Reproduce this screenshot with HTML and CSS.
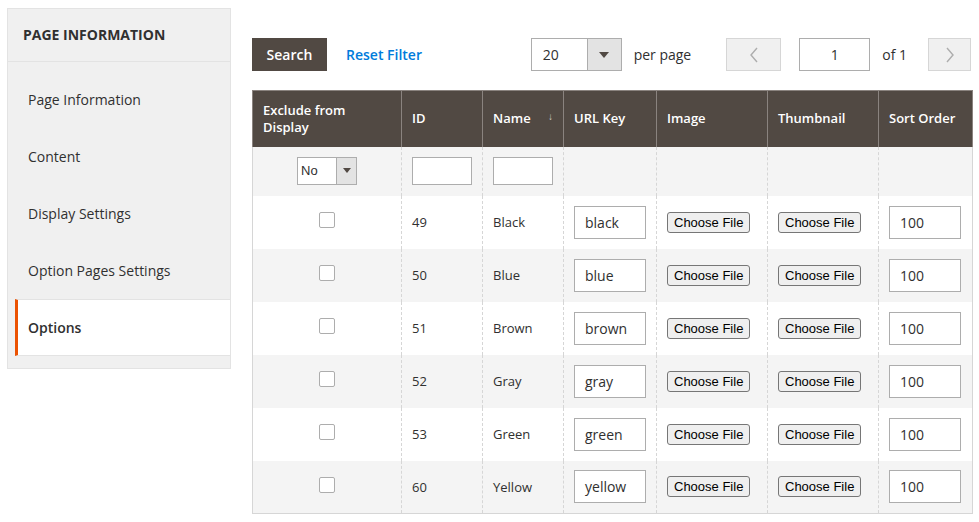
FILE: index.html
```html
<!DOCTYPE html>
<html>
<head>
<meta charset="utf-8">
<link rel="stylesheet" href="styles.css">
</head>
<body>
<div class="page">
  <aside class="sidebar">
    <div class="side-title">PAGE INFORMATION</div>
    <ul class="side-list">
      <li class="side-item">Page Information</li>
      <li class="side-item">Content</li>
      <li class="side-item">Display Settings</li>
      <li class="side-item">Option Pages Settings</li>
      <li class="side-item active">Options</li>
    </ul>
  </aside>
  <main class="main">
    <div class="toolbar">
      <button class="btn-search">Search</button>
      <a class="reset">Reset Filter</a>
      <div class="pager">
        <div class="select-box"><span class="select-val">20</span><span class="select-arrow"><i class="tri"></i></span></div>
        <span class="per-page">per page</span>
        <button class="nav-btn prev"><svg width="10" height="16" viewBox="0 0 10 16"><path d="M8 1 L2 8 L8 15" fill="none" stroke="#adadad" stroke-width="1.4"/></svg></button>
        <div class="page-input">1</div>
        <span class="of">of 1</span>
        <button class="nav-btn next"><svg width="10" height="16" viewBox="0 0 10 16"><path d="M2 1 L8 8 L2 15" fill="none" stroke="#adadad" stroke-width="1.4"/></svg></button>
      </div>
    </div>
    <table class="grid">
      <colgroup>
        <col style="width:149px"><col style="width:81px"><col style="width:81px"><col style="width:93px"><col style="width:111px"><col style="width:111px"><col style="width:94px">
      </colgroup>
      <thead>
        <tr>
          <th>Exclude from<br>Display</th>
          <th>ID</th>
          <th class="sortable">Name<span class="sort">↓</span></th>
          <th>URL Key</th>
          <th>Image</th>
          <th>Thumbnail</th>
          <th>Sort Order</th>
        </tr>
      </thead>
      <tbody>
        <tr class="filters">
          <td class="center"><div class="mini-select"><span>No</span><span class="mini-arrow"><i class="tri small"></i></span></div></td>
          <td><div class="filter-input"></div></td>
          <td><div class="filter-input"></div></td>
          <td></td><td></td><td></td><td></td>
        </tr>
        <tr class="row"><td class="center"><span class="check"></span></td><td>49</td><td>Black</td><td><div class="txt">black</div></td><td><span class="file-btn">Choose File</span></td><td><span class="file-btn">Choose File</span></td><td><div class="txt">100</div></td></tr>
        <tr class="row alt"><td class="center"><span class="check"></span></td><td>50</td><td>Blue</td><td><div class="txt">blue</div></td><td><span class="file-btn">Choose File</span></td><td><span class="file-btn">Choose File</span></td><td><div class="txt">100</div></td></tr>
        <tr class="row"><td class="center"><span class="check"></span></td><td>51</td><td>Brown</td><td><div class="txt">brown</div></td><td><span class="file-btn">Choose File</span></td><td><span class="file-btn">Choose File</span></td><td><div class="txt">100</div></td></tr>
        <tr class="row alt"><td class="center"><span class="check"></span></td><td>52</td><td>Gray</td><td><div class="txt">gray</div></td><td><span class="file-btn">Choose File</span></td><td><span class="file-btn">Choose File</span></td><td><div class="txt">100</div></td></tr>
        <tr class="row"><td class="center"><span class="check"></span></td><td>53</td><td>Green</td><td><div class="txt">green</div></td><td><span class="file-btn">Choose File</span></td><td><span class="file-btn">Choose File</span></td><td><div class="txt">100</div></td></tr>
        <tr class="row alt"><td class="center"><span class="check"></span></td><td>60</td><td>Yellow</td><td><div class="txt">yellow</div></td><td><span class="file-btn">Choose File</span></td><td><span class="file-btn">Choose File</span></td><td><div class="txt">100</div></td></tr>
      </tbody>
    </table>
  </main>
</div>
</body>
</html>
```

FILE: styles.css
```css
* { box-sizing: border-box; }
html, body { margin: 0; padding: 0; background: #fff; }
body { font-family: "Open Sans", "Liberation Sans", sans-serif; color: #303030; font-size: 14px; }

.page { display: flex; align-items: flex-start; padding: 8px 7px 0 7px; }

.sidebar {
  width: 224px;
  flex: none;
  background: #f0f0f0;
  border: 1px solid #e3e3e3;
}
.side-title {
  height: 53px;
  line-height: 52px;
  padding-left: 15px;
  font-weight: 700;
  font-size: 14px;
  color: #303030;
  border-bottom: 1px solid #e3e3e3;
}
.side-list { list-style: none; margin: 0; padding: 9px 0 12px 0; }
.side-item {
  height: 57px;
  line-height: 57px;
  padding-left: 20px;
  font-size: 14px;
  color: #303030;
}
.side-item.active {
  margin-left: 7px;
  padding-left: 10px;
  background: #fff;
  border-left: 3px solid #eb5202;
  border-top: 1px solid #e3e3e3;
  border-bottom: 1px solid #e3e3e3;
  line-height: 55px;
  font-weight: 600;
}

.main { margin-left: 21px; margin-top: 30px; width: 720px; }

.toolbar { display: flex; align-items: center; height: 33px; margin-bottom: 19px; }
.btn-search {
  height: 33px; width: 75px;
  background: #514943; color: #fff;
  border: 0; font-family: inherit; font-size: 14px; font-weight: 600;
  padding: 0;
}
.reset { color: #007bdb; font-weight: 600; font-size: 14px; margin-left: 19px; }

.pager { display: flex; align-items: center; margin-left: auto; margin-right: 1px; }
.select-box {
  display: flex; width: 91px; height: 33px;
  border: 1px solid #adadad; background: #fff;
}
.select-val { flex: 1; line-height: 31px; padding-left: 11px; font-size: 14px; }
.select-arrow {
  width: 34px; background: #e3e3e3; border-left: 1px solid #adadad;
  display: flex; align-items: center; justify-content: center;
}
.tri { display: block; width: 0; height: 0; border-left: 5px solid transparent; border-right: 5px solid transparent; border-top: 6px solid #514943; }
.tri.small { border-left-width: 4px; border-right-width: 4px; border-top-width: 5px; }
.per-page { margin-left: 12px; font-size: 14px; }
.nav-btn {
  width: 43px; height: 33px; padding: 0;
  background: #f0f0f0; border: 1px solid #d6d6d6;
  display: flex; align-items: center; justify-content: center;
}
.prev { margin-left: 35px; width: 55px; }
.page-input {
  margin-left: 18px; width: 71px; height: 33px;
  border: 1px solid #adadad; text-align: center; line-height: 31px; font-size: 14px;
}
.of { margin-left: 12px; margin-right: 21px; font-size: 14px; }

.grid {
  width: 720px; border-collapse: collapse; table-layout: fixed;
  font-size: 13px;
  border: 1px solid #d6d6d6;
}
.grid th {
  background: #514943; color: #fff;
  font-weight: 600; font-size: 13px; text-align: left;
  height: 56px; padding: 0 10px; vertical-align: middle;
  border-left: 1px solid #8a837f; border-right: 1px solid #8a837f;
  border-top: 1px solid #8a837f;
  line-height: 17px;
}
.grid th.sortable { position: relative; }
.sort { position: absolute; right: 10px; top: 17px; font-size: 10px; font-weight: 400; color: #d0cbc7; }
.grid td {
  padding: 0 10px;
  border-left: 1px dashed #d6d6d6;
  vertical-align: middle;
}
.grid td:first-child { border-left: 1px solid #d6d6d6; }
.filters td { height: 49px; background: #f4f4f4; vertical-align: top; padding-top: 10px; }
.row td { height: 53px; background: #fff; }
.row.alt td { background: #f4f4f4; }
.grid td.center { text-align: center; }

.mini-select {
  display: inline-flex; width: 60px; height: 28px;
  border: 1px solid #adadad; background: #fff;
  text-align: left; font-family: "Liberation Sans", Arial, sans-serif; font-size: 13px;
}
.mini-select span:first-child { flex: 1; line-height: 26px; padding-left: 3px; }
.mini-arrow { width: 20px; background: #e3e3e3; border-left: 1px solid #adadad; display: flex; align-items: center; justify-content: center; }
.filter-input { width: 60px; height: 28px; border: 1px solid #adadad; background: #fff; }

.check {
  display: inline-block; width: 16px; height: 16px;
  border: 1px solid #adadad; border-radius: 2px; background: #fff;
  position: relative; top: -3px; vertical-align: middle;
}
.txt {
  width: 72px; height: 33px; border: 1px solid #adadad; background: #fff;
  line-height: 31px; padding-left: 10px; font-size: 14px;
}
.file-btn {
  display: inline-block; height: 21px; padding: 0 6px;
  font-family: "Liberation Sans", Arial, sans-serif; font-size: 13px; color: #000;
  line-height: 19px;
  background: #efefef; border: 1px solid #767676; border-radius: 3px;
}
```
